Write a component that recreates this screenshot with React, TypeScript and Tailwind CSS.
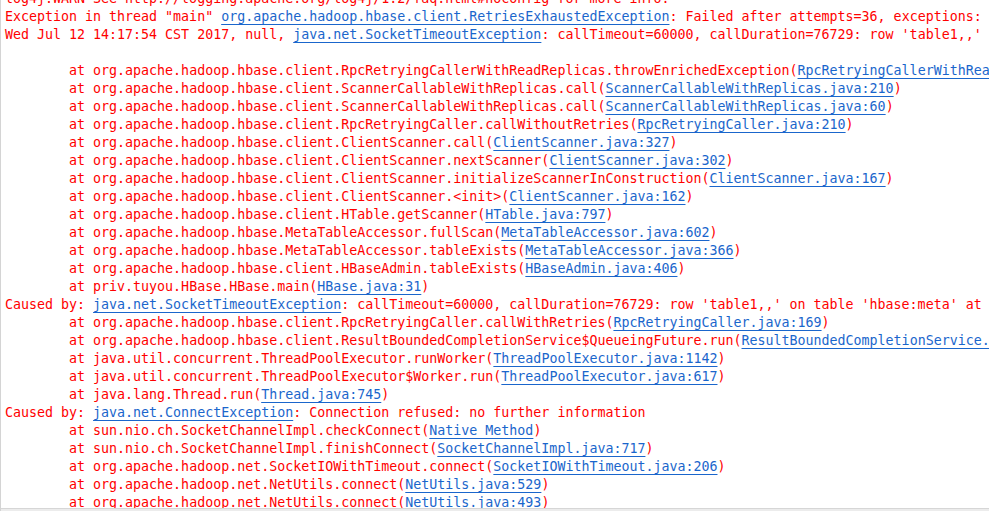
type Seg = { t: string; link?: boolean };

const at = (pre: string, link: string, post = ')'): Seg[] => [
  { t: '\tat ' + pre + '(' },
  { t: link, link: true },
  { t: post },
];

const lines: Seg[][] = [
  [{ t: 'log4j:WARN See http://logging.apache.org/log4j/1.2/faq.html#noconfig for more info.' }],
  [
    { t: 'Exception in thread "main" ' },
    { t: 'org.apache.hadoop.hbase.client.RetriesExhaustedException', link: true },
    { t: ': Failed after attempts=36, exceptions:' },
  ],
  [
    { t: 'Wed Jul 12 14:17:54 CST 2017, null, ' },
    { t: 'java.net.SocketTimeoutException', link: true },
    { t: ": callTimeout=60000, callDuration=76729: row 'table1,,' on table 'hbase:meta'" },
  ],
  [{ t: ' ' }],
  at(
    'org.apache.hadoop.hbase.client.RpcRetryingCallerWithReadReplicas.throwEnrichedException',
    'RpcRetryingCallerWithReadReplicas.java:286'
  ),
  at('org.apache.hadoop.hbase.client.ScannerCallableWithReplicas.call', 'ScannerCallableWithReplicas.java:210'),
  at('org.apache.hadoop.hbase.client.ScannerCallableWithReplicas.call', 'ScannerCallableWithReplicas.java:60'),
  at('org.apache.hadoop.hbase.client.RpcRetryingCaller.callWithoutRetries', 'RpcRetryingCaller.java:210'),
  at('org.apache.hadoop.hbase.client.ClientScanner.call', 'ClientScanner.java:327'),
  at('org.apache.hadoop.hbase.client.ClientScanner.nextScanner', 'ClientScanner.java:302'),
  at('org.apache.hadoop.hbase.client.ClientScanner.initializeScannerInConstruction', 'ClientScanner.java:167'),
  at('org.apache.hadoop.hbase.client.ClientScanner.<init>', 'ClientScanner.java:162'),
  at('org.apache.hadoop.hbase.client.HTable.getScanner', 'HTable.java:797'),
  at('org.apache.hadoop.hbase.MetaTableAccessor.fullScan', 'MetaTableAccessor.java:602'),
  at('org.apache.hadoop.hbase.MetaTableAccessor.tableExists', 'MetaTableAccessor.java:366'),
  at('org.apache.hadoop.hbase.client.HBaseAdmin.tableExists', 'HBaseAdmin.java:406'),
  at('priv.tuyou.HBase.HBase.main', 'HBase.java:31'),
  [
    { t: 'Caused by: ' },
    { t: 'java.net.SocketTimeoutException', link: true },
    { t: ": callTimeout=60000, callDuration=76729: row 'table1,,' on table 'hbase:meta' at region=hbase:meta,,1.1588230740" },
  ],
  at('org.apache.hadoop.hbase.client.RpcRetryingCaller.callWithRetries', 'RpcRetryingCaller.java:169'),
  at(
    'org.apache.hadoop.hbase.client.ResultBoundedCompletionService$QueueingFuture.run',
    'ResultBoundedCompletionService.java:65'
  ),
  at('java.util.concurrent.ThreadPoolExecutor.runWorker', 'ThreadPoolExecutor.java:1142'),
  at('java.util.concurrent.ThreadPoolExecutor$Worker.run', 'ThreadPoolExecutor.java:617'),
  at('java.lang.Thread.run', 'Thread.java:745'),
  [
    { t: 'Caused by: ' },
    { t: 'java.net.ConnectException', link: true },
    { t: ': Connection refused: no further information' },
  ],
  at('sun.nio.ch.SocketChannelImpl.checkConnect', 'Native Method'),
  at('sun.nio.ch.SocketChannelImpl.finishConnect', 'SocketChannelImpl.java:717'),
  at('org.apache.hadoop.net.SocketIOWithTimeout.connect', 'SocketIOWithTimeout.java:206'),
  at('org.apache.hadoop.net.NetUtils.connect', 'NetUtils.java:529'),
  at('org.apache.hadoop.net.NetUtils.connect', 'NetUtils.java:493'),
];

export default function App() {
  return (
    <div className="w-[989px] h-[511px] bg-white flex flex-col overflow-hidden border-l border-[#d4d4d4]">
      <div className="flex-1 overflow-hidden pl-1">
        <div
          className="-mt-[10px] whitespace-pre [tab-size:8] text-[13.3px] leading-[18px] text-[#ff0000]"
          style={{ fontFamily: '"DejaVu Sans Mono", "Liberation Mono", monospace' }}
        >
          {lines.map((segs, i) => (
            <div key={i} className="h-[18px]">
              {segs.map((s, j) =>
                s.link ? (
                  <span key={j} className="text-[#1a66cc] underline underline-offset-[3px] decoration-[#1a66cc]">
                    {s.t}
                  </span>
                ) : (
                  <span key={j}>{s.t}</span>
                )
              )}
            </div>
          ))}
        </div>
      </div>
      <div className="h-[3px] bg-[#ececec] border-t border-[#d6d6d6]" />
    </div>
  );
}
